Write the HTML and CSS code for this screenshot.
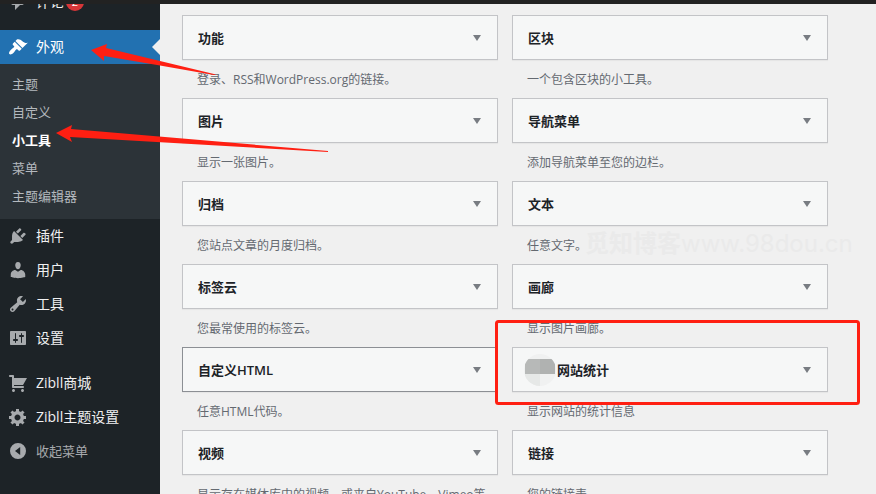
FILE: index.html
```html
<!DOCTYPE html>
<html lang="zh-CN">
<head>
<meta charset="utf-8">
<title>小工具</title>
<link rel="stylesheet" href="styles.css">
</head>
<body>
<div class="topbar"></div>
<div class="layout">
  <nav class="sidebar">
    <a class="item" href="#"><svg class="icon" viewBox="0 0 20 20"><path d="M5 2h9c1.1 0 2 .9 2 2v7c0 1.1-.9 2-2 2h-2l-5 5v-5H5c-1.1 0-2-.9-2-2V4c0-1.1.9-2 2-2z"/></svg><span>评论</span><span class="badge">2</span></a>
    <a class="item current" href="#"><svg class="icon" viewBox="0 0 20 20"><path d="M14.48 11.06L7.41 3.99l1.5-1.5c.5-.56 2.3-.47 3.51.32 1.21.8 1.43 1.28 2.91 2.1 1.18.64 2.45 1.26 4.45.85zm-.71.71L6.7 4.7 4.93 6.47c-.39.39-.39 1.02 0 1.41l1.06 1.06c.39.39.39 1.03 0 1.42-.6.6-1.43 1.11-2.21 1.69-.35.26-.7.53-1.01.84C1.43 14.23.4 16.08 1.4 17.07c.99 1 2.84-.03 4.18-1.36.31-.31.58-.66.85-1.02.57-.78 1.08-1.61 1.69-2.21.39-.39 1.02-.39 1.41 0l1.06 1.06c.39.39 1.02.39 1.41 0z"/></svg><span>外观</span></a>
    <div class="submenu">
      <a href="#">主题</a>
      <a href="#">自定义</a>
      <a class="active" href="#">小工具</a>
      <a href="#">菜单</a>
      <a href="#">主题编辑器</a>
    </div>
    <a class="item" href="#"><svg class="icon" viewBox="0 0 20 20"><path d="M13.11 4.36L9.87 7.6 8 5.73l3.24-3.24c.35-.34 1.05-.2 1.56.32.52.51.66 1.21.31 1.55zm-8 1.77l.91-1.12 9.01 9.01-1.19.84c-.71.71-2.63 1.16-3.82 1.16H6.14L4.9 17.26c-.59.59-1.54.59-2.12 0-.59-.58-.59-1.53 0-2.12l1.24-1.24v-3.88c0-1.13.4-3.19 1.09-3.89zm7.26 3.97l3.24-3.24c.34-.35 1.04-.21 1.55.31.52.51.66 1.21.31 1.55l-3.24 3.25z"/></svg><span>插件</span></a>
    <a class="item" href="#"><svg class="icon" viewBox="0 0 20 20"><path d="M10 9.25c-2.27 0-2.73-3.44-2.73-3.44C7 4.02 7.82 2 9.97 2c2.16 0 2.98 2.02 2.71 3.81 0 0-.41 3.44-2.68 3.44zm0 2.57L12.72 10c2.39 0 4.52 2.33 4.52 4.53v2.49s-3.65 1.13-7.24 1.13c-3.65 0-7.24-1.13-7.24-1.13v-2.49c0-2.25 1.94-4.48 4.47-4.48z"/></svg><span>用户</span></a>
    <a class="item" href="#"><svg class="icon" viewBox="0 0 20 20"><path d="M16.68 9.77c-1.34 1.34-3.3 1.67-4.95.99l-5.41 6.52c-.99.99-2.59.99-3.58 0s-.99-2.59 0-3.57l6.52-5.42c-.68-1.65-.35-3.61.99-4.95 1.28-1.28 3.12-1.62 4.72-1.06l-2.89 2.89 2.82 2.82 2.86-2.87c.53 1.58.18 3.39-1.08 4.65zM3.81 16.21c.4.39 1.04.39 1.43 0 .4-.4.4-1.04 0-1.43-.39-.4-1.03-.4-1.43 0-.39.39-.39 1.03 0 1.43z"/></svg><span>工具</span></a>
    <a class="item" href="#"><svg class="icon" viewBox="0 0 20 20"><path d="M18 16V4c0-.55-.45-1-1-1H3c-.55 0-1 .45-1 1v12c0 .55.45 1 1 1h14c.55 0 1-.45 1-1zM8 11h1c.55 0 1 .45 1 1s-.45 1-1 1H8v1.500c0 .28-.22.5-.5.5s-.5-.22-.5-.5V13H6c-.55 0-1-.45-1-1s.45-1 1-1h1V5.500c0-.28.22-.5.5-.5s.5.22.5.5V11zm5-2h-1c-.55 0-1-.45-1-1s.45-1 1-1h1V5.500c0-.28.22-.5.5-.5s.5.22.5.5V7h1c.55 0 1 .45 1 1s-.45 1-1 1h-1v5.500c0 .28-.22.5-.5.5s-.5-.22-.5-.5V9z"/></svg><span>设置</span></a>
    <div class="separator"></div>
    <a class="item" href="#"><svg class="icon" viewBox="0 0 20 20"><path d="M6 13h9c.55 0 1 .45 1 1s-.45 1-1 1H5c-.55 0-1-.45-1-1V4H2c-.55 0-1-.45-1-1s.45-1 1-1h3c.55 0 1 .45 1 1v2h13l-4 7H6v1zm-.5 3c.83 0 1.500.67 1.500 1.500S6.330 19 5.500 19 4 18.330 4 17.500 4.670 16 5.500 16zm9 0c.83 0 1.500.67 1.500 1.500s-.67 1.500-1.500 1.500-1.500-.67-1.500-1.500.67-1.500 1.500-1.500z"/></svg><span>Zibll商城</span></a>
    <a class="item" href="#"><svg class="icon" viewBox="0 0 20 20"><path d="M18 12h-2.18c-.17.7-.44 1.35-.81 1.93l1.54 1.54-2.1 2.1-1.54-1.54c-.58.36-1.23.63-1.91.79V19H8v-2.18c-.68-.16-1.33-.43-1.91-.79l-1.54 1.54-2.12-2.12 1.54-1.54c-.36-.58-.63-1.23-.79-1.91H1V9.030h2.170c.16-.7.44-1.35.8-1.94L2.430 5.550l2.1-2.1 1.54 1.54c.58-.37 1.24-.64 1.93-.81V2h3v2.180c.68.16 1.33.43 1.91.79l1.54-1.54 2.12 2.12-1.54 1.54c.36.59.64 1.24.8 1.94H18V12zm-8.500 1.500c1.660 0 3-1.340 3-3s-1.340-3-3-3-3 1.340-3 3 1.340 3 3 3z"/></svg><span>Zibll主题设置</span></a>
    <button class="item collapse" type="button"><svg class="icon" viewBox="0 0 20 20"><path fill-rule="evenodd" d="M10 2a8 8 0 1 0 0 16 8 8 0 0 0 0-16zM12.200 6v8L7 10z"/></svg><span>收起菜单</span></button>
  </nav>
  <main class="content">
    <section class="widget"><button class="card" type="button"><span>功能</span><i class="caret"></i></button><p>登录、RSS和WordPress.org的链接。</p></section>
    <section class="widget"><button class="card" type="button"><span>区块</span><i class="caret"></i></button><p>一个包含区块的小工具。</p></section>
    <section class="widget"><button class="card" type="button"><span>图片</span><i class="caret"></i></button><p>显示一张图片。</p></section>
    <section class="widget"><button class="card" type="button"><span>导航菜单</span><i class="caret"></i></button><p>添加导航菜单至您的边栏。</p></section>
    <section class="widget"><button class="card" type="button"><span>归档</span><i class="caret"></i></button><p>您站点文章的月度归档。</p></section>
    <section class="widget"><button class="card" type="button"><span>文本</span><i class="caret"></i></button><p>任意文字。</p></section>
    <section class="widget"><button class="card" type="button"><span>标签云</span><i class="caret"></i></button><p>您最常使用的标签云。</p></section>
    <section class="widget"><button class="card" type="button"><span>画廊</span><i class="caret"></i></button><p>显示图片画廊。</p></section>
    <section class="widget"><button class="card hovered" type="button"><span>自定义HTML</span><i class="caret"></i></button><p>任意HTML代码。</p></section>
    <section class="widget"><button class="card masked" type="button"><svg class="mosaic" viewBox="0 0 32 32"><defs><clipPath id="disc"><circle cx="16" cy="16" r="16"/></clipPath></defs><g clip-path="url(#disc)"><path fill="#f0f1f1" d="M0 0h32v32H0z"/><path fill="#b7b9b8" d="M1 5h15v15H1z"/><path fill="#b0b2b1" d="M16 5h15v15H16z"/><path fill="#e6e8e7" d="M1 20h15v12H1z"/></g></svg><span>网站统计</span><i class="caret"></i></button><p>显示网站的统计信息</p></section>
    <section class="widget"><button class="card" type="button"><span>视频</span><i class="caret"></i></button><p>显示存在媒体库中的视频，或来自YouTube、Vimeo等</p></section>
    <section class="widget"><button class="card" type="button"><span>链接</span><i class="caret"></i></button><p>您的链接表</p></section>
  </main>
</div>
<div class="watermark">觅知博客<span>www.98dou.cn</span></div>
<svg class="marks" width="876" height="494" viewBox="0 0 876 494">
  <path d="M91 50L107 44L106 48L160 61L216 74.500L214 75L160 65.500L104 56L104 61Z"/>
  <path d="M56 133L72 125L71 129L328 151L328 152L70 137L72 142Z"/>
  <rect x="496.500" y="321.500" width="362" height="82" rx="2"/>
</svg>
</body>
</html>
```
FILE: styles.css
```css
* { box-sizing: border-box; }

body {
  margin: 0;
  height: 100vh;
  overflow: hidden;
  position: relative;
  display: flex;
  flex-direction: column;
  background: #f0f0f0;
  font-family: "Open Sans", "Noto Sans CJK SC", sans-serif;
  font-size: 14px;
}

button { font-family: inherit; border: 0; cursor: pointer; text-align: left; }
a { text-decoration: none; }

.topbar { flex: none; height: 4px; background: #222222; }

.layout { flex: 1; min-height: 0; display: flex; overflow: hidden; }

.sidebar {
  flex: none;
  width: 160px;
  display: flex;
  flex-direction: column;
  justify-content: flex-end;
  padding-bottom: 26px;
  background: #1d2327;
}

.item {
  flex: none;
  height: 34px;
  display: flex;
  align-items: center;
  gap: 8px;
  padding: 0 8px;
  color: #f0f0f1;
  background: none;
  font-size: 14px;
  line-height: 18px;
}

.icon { flex: none; width: 20px; height: 20px; fill: #a7aaad; }

.badge {
  width: 18px;
  height: 18px;
  margin-left: -6px;
  border-radius: 9px;
  background: #d63638;
  color: #fff;
  font-size: 11px;
  text-align: center;
}

.current { position: relative; margin-top: 11px; background: #2271b1; color: #fff; }
.current .icon { fill: #fff; }
.current::after {
  content: "";
  position: absolute;
  right: 0;
  top: 9px;
  border: 8px solid transparent;
  border-left: 0;
  border-right-color: #f0f0f0;
}

.submenu {
  flex: none;
  display: flex;
  flex-direction: column;
  padding: 6px 12px 9px;
  background: #2c3338;
}
.submenu a { height: 28px; line-height: 28px; font-size: 13px; color: #b4b9be; }
.submenu .active { color: #fff; font-weight: 700; }

.separator { flex: none; height: 11px; }
.collapse { color: #a7aaad; font-size: 13px; }

.content {
  flex: 1;
  min-width: 0;
  display: grid;
  grid-template-columns: 1fr 1fr;
  align-content: start;
  column-gap: 14px;
  padding: 11px 48px 0 22px;
}

.widget { height: 83px; min-width: 0; }

.card {
  width: 100%;
  height: 45px;
  display: flex;
  align-items: center;
  padding: 0 16px 0 15px;
  border: 1px solid #c3c4c7;
  background: #f6f7f7;
  box-shadow: 0 1px 1px rgba(0, 0, 0, .04);
  color: #1d2327;
  font-size: 13px;
  font-weight: 600;
}
.hovered { border-color: #8c8f94; }
.masked { padding-left: 11px; }
.mosaic { width: 32px; height: 32px; margin-right: 1px; }

.caret {
  margin-left: auto;
  border: 4px solid transparent;
  border-top: 6px solid #787c82;
  border-bottom: 0;
}

.widget p {
  margin: 0;
  padding: 11px 15px 0;
  color: #646970;
  font-size: 12px;
  line-height: 18px;
  white-space: nowrap;
}

.watermark {
  position: absolute;
  left: 585px;
  top: 226px;
  color: #eaeaea;
  font-size: 24px;
  font-weight: 700;
  line-height: 34px;
  white-space: nowrap;
  pointer-events: none;
}
.watermark span { font-family: Inter, sans-serif; font-weight: 400; }

.marks { position: absolute; left: 0; top: 0; fill: #ff1f12; pointer-events: none; }
.marks rect { fill: none; stroke: #ff1f12; stroke-width: 3; }
```
